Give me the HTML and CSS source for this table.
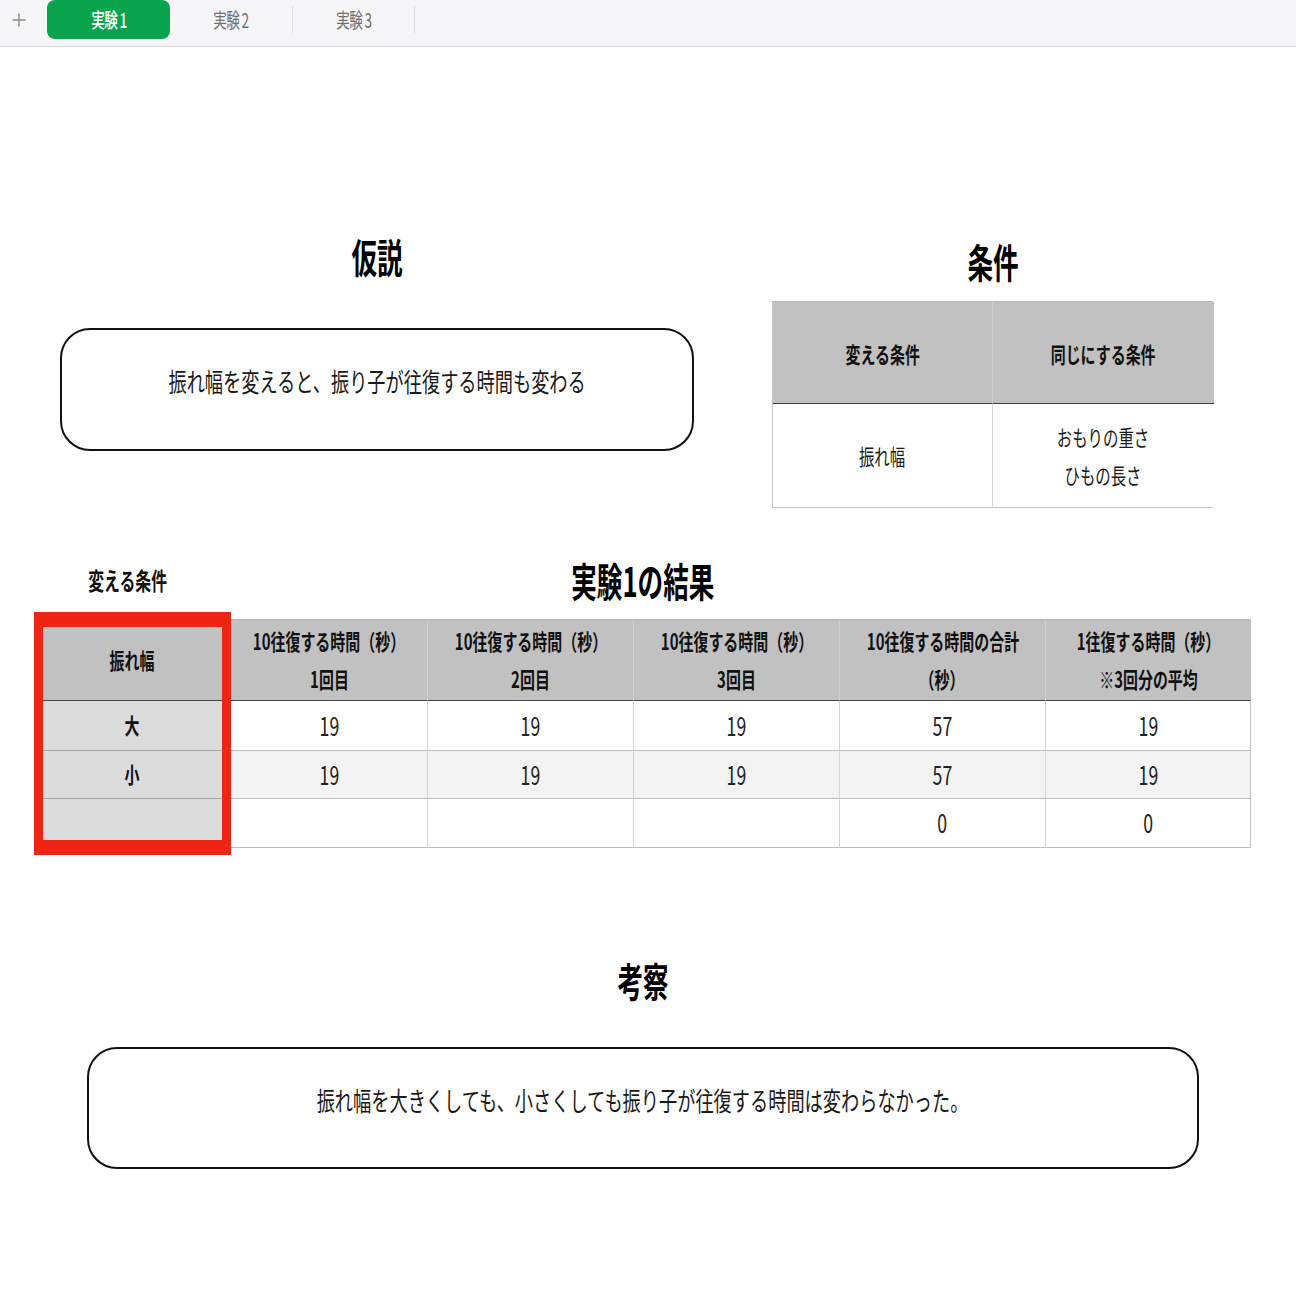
FILE: index.html
```html
<!DOCTYPE html>
<html lang="ja">
<head>
<meta charset="utf-8">
<title>実験1</title>
<link rel="stylesheet" href="styles.css">
</head>
<body>
<header class="tabbar">
  <div class="plus">
    <svg width="14" height="14" viewBox="0 0 14 14"><path d="M7 0.5V13.5M0.5 7H13.5" stroke="#8a8a8a" stroke-width="1.4" fill="none"/></svg>
  </div>
  <div class="tab active"><span class="n">実験 1</span></div>
  <div class="tab"><span class="n">実験 2</span></div>
  <div class="sep"></div>
  <div class="tab t3"><span class="n">実験 3</span></div>
  <div class="sep"></div>
</header>

<main class="page">
  <section class="top">
    <div class="hyp">
      <h2 class="title"><span class="n">仮説</span></h2>
      <div class="bubble"><span class="n">振れ幅を変えると、振り子が往復する時間も変わる</span></div>
    </div>
    <div class="cond">
      <h2 class="title"><span class="n">条件</span></h2>
      <div class="ctable">
        <div class="ch"><span class="n">変える条件</span></div>
        <div class="ch"><span class="n">同じにする条件</span></div>
        <div class="cb"><span class="n">振れ幅</span></div>
        <div class="cb"><span class="n">おもりの重さ</span><span class="n">ひもの長さ</span></div>
      </div>
    </div>
  </section>

  <section class="results">
    <div class="rhead">
      <div class="label"><span class="n">変える条件</span></div>
      <h2 class="title"><span class="n">実験1の結果</span></h2>
    </div>
    <div class="rwrap">
      <div class="rtable">
        <div class="h k"><span class="n">振れ幅</span></div>
        <div class="h"><span class="n">10往復する時間（秒）</span><span class="n">1回目</span></div>
        <div class="h"><span class="n">10往復する時間（秒）</span><span class="n">2回目</span></div>
        <div class="h"><span class="n">10往復する時間（秒）</span><span class="n">3回目</span></div>
        <div class="h"><span class="n">10往復する時間の合計</span><span class="n">（秒）</span></div>
        <div class="h last"><span class="n">1往復する時間（秒）</span><span class="n">※3回分の平均</span></div>

        <div class="d k"><span class="n">大</span></div>
        <div class="d"><span class="n">19</span></div>
        <div class="d"><span class="n">19</span></div>
        <div class="d"><span class="n">19</span></div>
        <div class="d"><span class="n">57</span></div>
        <div class="d last"><span class="n">19</span></div>

        <div class="d k"><span class="n">小</span></div>
        <div class="d alt"><span class="n">19</span></div>
        <div class="d alt"><span class="n">19</span></div>
        <div class="d alt"><span class="n">19</span></div>
        <div class="d alt"><span class="n">57</span></div>
        <div class="d alt last"><span class="n">19</span></div>

        <div class="d k"></div>
        <div class="d"></div>
        <div class="d"></div>
        <div class="d"></div>
        <div class="d"><span class="n">0</span></div>
        <div class="d last"><span class="n">0</span></div>
      </div>
      <div class="hl"></div>
    </div>
  </section>

  <section class="concl">
    <h2 class="title"><span class="n">考察</span></h2>
    <div class="bubble"><span class="n">振れ幅を大きくしても、小さくしても振り子が往復する時間は変わらなかった。</span></div>
  </section>
</main>
</body>
</html>
```
FILE: styles.css
```css
* { box-sizing: border-box; margin: 0; padding: 0; }
body {
  margin: 0;
  background: #fff;
  font-family: "Noto Sans CJK JP", "Noto Sans", sans-serif;
  color: #111;
  width: 1296px;
}
.n {
  display: inline-block;
  white-space: nowrap;
  transform: scaleX(0.68);
}

/* tab bar */
.tabbar {
  display: flex;
  align-items: flex-start;
  height: 47px;
  background: #f6f6f8;
  border-bottom: 1px solid #dcdcdc;
}
.plus {
  width: 38px;
  height: 39px;
  display: flex;
  align-items: center;
  justify-content: center;
  margin-right: 9px;
}
.tab {
  width: 122px;
  height: 39px;
  display: flex;
  align-items: center;
  justify-content: center;
  font-size: 20px;
  color: #6e6e6e;
}
.tab .n { letter-spacing: -1px; }
.tab.t3 { width: 121px; }
.tab.active {
  width: 123px;
  background: #0aa44f;
  color: #fff;
  border-radius: 8px;
  font-weight: 500;
}
.sep {
  width: 1px;
  height: 27px;
  margin-top: 6px;
  background: #dedede;
}

/* common */
.title {
  font-size: 40px;
  font-weight: 700;
  line-height: 50px;
  text-align: center;
  color: #000;
}
.title .n { transform: scaleX(0.64); }
.bubble {
  border: 2px solid #111;
  border-radius: 30px;
  display: flex;
  align-items: center;
  justify-content: center;
  padding-bottom: 18px;
  font-size: 26px;
  color: #1a1a1a;
}
.bubble .n { transform: scaleX(0.7); }

/* top */
.top {
  display: grid;
  grid-template-columns: 634px 441px;
  column-gap: 78px;
  padding-left: 60px;
  align-items: start;
}
.hyp { padding-top: 184px; }
.hyp .bubble { margin-top: 47px; height: 123px; }
.cond { padding-top: 189px; }
.ctable {
  margin-top: 15px;
  display: grid;
  grid-template-columns: 220px 221px;
  grid-template-rows: 102px 103px;
  border: 1px solid #c4c4c4;
  border-top-color: #b8b8b8;
}
.ch, .cb {
  display: flex;
  flex-direction: column;
  align-items: center;
  justify-content: center;
  font-size: 22px;
  line-height: 38px;
}
.ch {
  background: #c0c1c0;
  font-weight: 700;
  border-bottom: 1px solid #3c3c3c;
  color: #111;
}
.ch:first-child { border-right: 1px solid #d2d2d2; }
.cb { background: #fff; color: #1a1a1a; padding-bottom: 2px; }
.cb:nth-child(3) { border-right: 1px solid #d8d8d8; }
.cb .n { transform: scaleX(0.7); }

/* results */
.results {
  margin: 47px 45px 0 34px;
}
.rhead {
  display: grid;
  grid-template-columns: 197px 1fr 197px;
  align-items: center;
  margin-bottom: 14px;
}
.label {
  text-align: center;
  padding-right: 10px;
  font-size: 24px;
  font-weight: 700;
  line-height: 30px;
}
.label .n { transform: scaleX(0.66); }
.rwrap { position: relative; }
.rtable {
  display: grid;
  grid-template-columns: 197px 197px 206px 206px 206px 205px;
  grid-template-rows: 81px 50px 48px 49px;
  border-top: 1px solid #b4b4b4;
}
.h, .d {
  display: flex;
  flex-direction: column;
  align-items: center;
  justify-content: center;
  border-right: 1px solid #d6d6d6;
}
.h {
  background: #c0c1c0;
  font-size: 22px;
  font-weight: 700;
  line-height: 38px;
  border-right-color: #cfcfcf;
  border-bottom: 1px solid #444;
  color: #111;
  padding-bottom: 2px;
}
.d {
  font-size: 26px;
  color: #222;
  border-bottom: 1px solid #bdbdbd;
  background: #fff;
  padding-bottom: 3px;
}
.d.alt { background: #f3f3f3; }
.last { border-right-color: #c4c4c4; }
.d.k {
  background: #dcdcdc;
  font-size: 22px;
  font-weight: 700;
  color: #111;
  border-bottom-color: #a8a8a8;
}
.hl {
  position: absolute;
  left: 0;
  top: -7px;
  width: 197px;
  height: 243px;
  border-style: solid;
  border-color: #ef2415;
  border-width: 15px 9px;
}

/* conclusion */
.concl {
  margin: 107px 0 0 87px;
  width: 1112px;
  padding-bottom: 100px;
}
.concl .bubble { margin-top: 42px; height: 122px; }
```
